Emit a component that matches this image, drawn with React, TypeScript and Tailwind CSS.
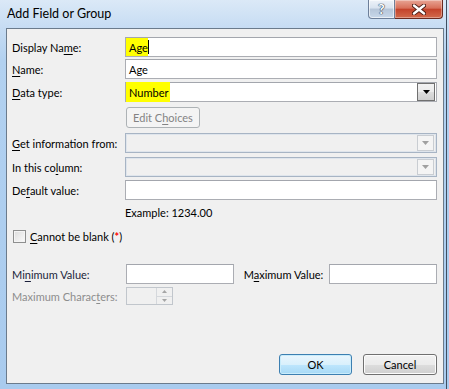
import React from "react";

const U = ({ c }: { c: string }) => <span className="underline underline-offset-[2px]">{c}</span>;

function TextBox({ children, className = "" }: { children?: React.ReactNode; className?: string }) {
  return (
    <div className={`h-[20px] border border-[#abadb3] border-t-[#a3a6ad] bg-white flex items-center ${className}`}>
      {children}
    </div>
  );
}

function DisabledCombo() {
  return (
    <div className="h-[20px] flex-1 border border-[#a7b4c4] bg-[#f0f0f0] flex items-center justify-end pr-[2px] shadow-[inset_0_0_0_1px_#dfe5ec]">
      <div className="w-[17px] h-[16px] border border-[#c9cdd2] bg-[#f4f4f4] flex items-center justify-center">
        <svg width="7" height="4" viewBox="0 0 7 4"><path d="M0 0h7L3.5 4z" fill="#a0a0a0" /></svg>
      </div>
    </div>
  );
}

function Row({ label, children, mt }: { label: React.ReactNode; children: React.ReactNode; mt: string }) {
  return (
    <div className={`flex items-center ${mt}`}>
      <div className="w-[113px] shrink-0 whitespace-nowrap">{label}</div>
      <div className="flex-1 flex">{children}</div>
    </div>
  );
}

export default function App() {
  return (
    <div className="w-[449px] h-[389px] relative overflow-hidden bg-[linear-gradient(180deg,#dbe9f7_0px,#c6dcf3_28px,#b2d1f0_60px,#a9cbee_389px)] font-['Lato',sans-serif] text-[11px] text-black leading-none">
      {/* title bar */}
      <div className="h-[28px] flex items-start justify-between">
        <div className="pl-[7px] pt-[8px] text-[12.5px] text-[#000] whitespace-nowrap">Add Field or Group</div>
        <div className="flex mr-[6px]">
          <div className="w-[27px] h-[19px] rounded-bl-[4px] border border-t-0 border-[#6d7f99] bg-[linear-gradient(180deg,#eef3f9_0%,#d8e3ef_45%,#b6c6d9_50%,#c8d8ea_100%)] flex items-center justify-center shadow-[inset_0_0_0_1px_rgba(255,255,255,0.6)]">
            <span className="text-white font-bold text-[14px] [text-shadow:0_0_1px_#2b3b52,0_0_1px_#2b3b52,0_0_1px_#2b3b52]">?</span>
          </div>
          <div className="w-[48px] h-[19px] rounded-br-[4px] border border-t-0 border-l-0 border-[#6b2a20] bg-[linear-gradient(180deg,#e8a595_0%,#d8705a_45%,#c4432b_52%,#d26a4c_100%)] flex items-center justify-center shadow-[inset_0_0_0_1px_rgba(255,255,255,0.35)]">
            <svg width="14" height="11" viewBox="0 0 14 11">
              <path d="M2 1.5L12 9.5M12 1.5L2 9.5" stroke="#4a1a12" strokeWidth="4.2" strokeLinecap="round" />
              <path d="M2 1.5L12 9.5M12 1.5L2 9.5" stroke="#ffffff" strokeWidth="2.4" strokeLinecap="round" />
            </svg>
          </div>
        </div>
      </div>
      <div className="absolute right-[2px] top-0 bottom-0 w-[1px] bg-[#3f4e60]" />

      {/* client area */}
      <div className="ml-[6px] w-[438px] h-[356px] border border-[#6b7b8c] bg-[#f0f0f0] pl-[5px] pr-[6px] flex flex-col">
        <Row mt="mt-[8px]" label={<span>Display Na<U c="m" />e:</span>}>
          <TextBox className="flex-1">
            <span className="bg-[#ffff00] h-full flex items-center pl-[3px] pr-[0px]">Age</span>
            <span className="w-[1px] h-[14px] bg-black" />
          </TextBox>
        </Row>
        <Row mt="mt-[2px]" label={<span><U c="N" />ame:</span>}>
          <TextBox className="flex-1">
            <span className="pl-[3px]">Age</span>
          </TextBox>
        </Row>
        <Row mt="mt-[3px]" label={<span><U c="D" />ata type:</span>}>
          <TextBox className="flex-1 justify-between">
            <span className="bg-[#ffff00] h-[20px] flex items-center pl-[3px] pr-[2px]">Number</span>
            <div className="mr-[1px] w-[18px] h-[18px] border border-[#707070] bg-[linear-gradient(180deg,#f2f2f2_0%,#ebebeb_50%,#dddddd_51%,#cfcfcf_100%)] flex items-center justify-center">
              <svg width="7" height="4" viewBox="0 0 7 4"><path d="M0 0h7L3.5 4z" fill="#000" /></svg>
            </div>
          </TextBox>
        </Row>
        <Row mt="mt-[5px]" label={<span />}>
          <div className="ml-[1px] w-[74px] h-[21px] rounded-[3px] border border-[#adb2b5] bg-[#f4f4f4] text-[#838383] flex items-center justify-center whitespace-nowrap">
            <span>Edit C<U c="h" />oices</span>
          </div>
        </Row>
        <Row mt="mt-[5px]" label={<span><U c="G" />et information from:</span>}>
          <DisabledCombo />
        </Row>
        <Row mt="mt-[4px]" label={<span>In this co<U c="l" />umn:</span>}>
          <DisabledCombo />
        </Row>
        <Row mt="mt-[3px]" label={<span>De<U c="f" />ault value:</span>}>
          <TextBox className="flex-1" />
        </Row>
        <div className="mt-[6px] pl-[113px] h-[13px] flex items-center whitespace-nowrap">Example: 1234.00</div>

        <div className="mt-[10px] flex items-center h-[14px]">
          <div className="ml-[1px] w-[13px] h-[13px] border border-[#8e8f8f] bg-[linear-gradient(135deg,#dcdcdc,#fbfbfb)] shadow-[inset_0_0_0_1px_#f4f4f4]" />
          <span className="ml-[4px] whitespace-nowrap"><U c="C" />annot be blank (<span className="text-[#ff0000] font-bold">*</span>)</span>
        </div>

        <div className="mt-[21px] flex items-center">
          <div className="w-[113px] shrink-0 text-[#1a1f3a] whitespace-nowrap">Mi<U c="n" />imum Value:</div>
          <TextBox className="ml-[1px] w-[108px] border-[#a9b8cb]" />
          <div className="ml-[10px] w-[86px] whitespace-nowrap">M<U c="a" />ximum Value:</div>
          <TextBox className="w-[108px] border-[#a9b8cb]" />
        </div>

        <div className="mt-[3px] flex items-center">
          <div className="w-[113px] shrink-0 text-[#8d8d8d] whitespace-nowrap">Maximum Charac<U c="t" />ers:</div>
          <div className="ml-[1px] w-[47px] h-[18px] border border-[#c1c6cc] bg-[#f0f0f0] flex justify-end">
            <div className="w-[16px] h-full border-l border-[#d5d8dc] flex flex-col">
              <div className="flex-1 flex items-center justify-center border-b border-[#d5d8dc]">
                <svg width="5" height="3" viewBox="0 0 5 3"><path d="M0 3h5L2.5 0z" fill="#a5a5a5" /></svg>
              </div>
              <div className="flex-1 flex items-center justify-center">
                <svg width="5" height="3" viewBox="0 0 5 3"><path d="M0 0h5L2.5 3z" fill="#a5a5a5" /></svg>
              </div>
            </div>
          </div>
        </div>

        <div className="mt-auto mb-[8px] flex justify-end gap-[11px]">
          <div className="w-[73px] h-[21px] rounded-[3px] border border-[#3c7fb1] bg-[linear-gradient(180deg,#eaf6fd_0%,#d9f0fc_50%,#bee6fd_51%,#a7d9f5_100%)] shadow-[inset_0_0_0_1px_#c9ecfb] flex items-center justify-center">
            OK
          </div>
          <div className="w-[74px] h-[21px] rounded-[3px] border border-[#707070] bg-[linear-gradient(180deg,#f2f2f2_0%,#ebebeb_50%,#dddddd_51%,#cfcfcf_100%)] shadow-[inset_0_0_0_1px_#fcfcfc] flex items-center justify-center">
            Cancel
          </div>
        </div>
      </div>
    </div>
  );
}
